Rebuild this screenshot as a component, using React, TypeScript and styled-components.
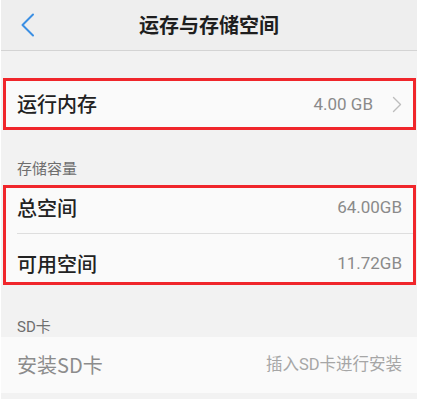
import React from "react";
import styled, { createGlobalStyle } from "styled-components";

const Global = createGlobalStyle`
  html, body { margin: 0; padding: 0; background: #ffffff; }
  body { font-family: Roboto, "Noto Sans CJK SC", "Noto Sans", sans-serif; }
  * { box-sizing: border-box; }
`;

const Page = styled.div`
  width: 416px;
  height: 399px;
  margin-left: 1px;
  background: #f2f2f2;
  display: flex;
  flex-direction: column;
  overflow: hidden;
`;

const Header = styled.header`
  height: 51px;
  flex: none;
  background: #eeeeee;
  border-bottom: 1px solid #d4d4d4;
  display: grid;
  grid-template-columns: 60px 1fr 60px;
  align-items: center;
`;

const BackButton = styled.div`
  display: flex;
  align-items: center;
  padding-left: 19px;
  height: 100%;
`;

const Title = styled.h1`
  margin: 0;
  text-align: center;
  font-size: 20px;
  font-weight: 700;
  color: #1e1e1e;
  line-height: 1;
  font-family: "Noto Sans CJK SC", sans-serif;
`;

const Spacer = styled.div<{ $h: number }>`
  height: ${(p) => p.$h}px;
  flex: none;
`;

const Highlight = styled.section`
  margin: 0 1px 0 2px;
  border: 3px solid #f0262b;
  background: #fafafa;
  display: flex;
  flex-direction: column;
  flex: none;
`;

const Row = styled.div<{ $h: number; $pt?: number; $pb?: number }>`
  height: ${(p) => p.$h}px;
  padding: ${(p) => p.$pt ?? 0}px 11px ${(p) => p.$pb ?? 0}px 11px;
  display: flex;
  align-items: center;
  justify-content: space-between;
  flex: none;
`;

const PlainRow = styled(Row)`
  background: #fafafa;
  padding-left: 16px;
  padding-right: 15px;
`;

const Divider = styled.div`
  height: 1px;
  margin-left: 11px;
  background: #dedede;
  flex: none;
`;

const Label = styled.span<{ $muted?: boolean }>`
  font-family: "Noto Sans CJK SC", Roboto, sans-serif;
  font-size: 20px;
  font-weight: ${(p) => (p.$muted ? 400 : 500)};
  color: ${(p) => (p.$muted ? "#8c8c8c" : "#222222")};
  line-height: 1;
  display: flex;
  align-items: center;
`;

const Value = styled.span<{ $size?: number; $light?: boolean }>`
  font-family: Roboto, "Noto Sans CJK SC", sans-serif;
  font-size: ${(p) => p.$size ?? 17}px;
  color: ${(p) => (p.$light ? "#a6a6a6" : "#8a8a8a")};
  line-height: 1;
  display: flex;
  align-items: center;
  gap: 19px;
`;

const SectionLabel = styled.div<{ $h: number; $pb: number }>`
  height: ${(p) => p.$h}px;
  padding: 0 16px ${(p) => p.$pb}px 16px;
  display: flex;
  align-items: flex-end;
  font-family: Roboto, "Noto Sans CJK SC", sans-serif;
  font-size: 15px;
  line-height: 20px;
  color: #6e6e6e;
  flex: none;
`;

const Chevron = () => (
  <svg width="10" height="17" viewBox="0 0 10 17" fill="none">
    <path d="M1.5 1.5 L8.5 8.5 L1.5 15.5" stroke="#bdbdbd" strokeWidth="1.4" strokeLinecap="round" strokeLinejoin="round" />
  </svg>
);

const BackIcon = () => (
  <svg width="15" height="24" viewBox="0 0 15 24" fill="none">
    <path d="M13 1.5 L2.5 12 L13 22.5" stroke="#3b8fe3" strokeWidth="2" strokeLinecap="round" strokeLinejoin="round" />
  </svg>
);

export default function App() {
  return (
    <>
      <Global />
      <Page>
        <Header>
          <BackButton>
            <BackIcon />
          </BackButton>
          <Title>运存与存储空间</Title>
          <div />
        </Header>
        <Spacer $h={27} />
        <Highlight>
          <Row $h={46}>
            <Label>运行内存</Label>
            <Value>
              4.00 GB
              <Chevron />
            </Value>
          </Row>
        </Highlight>
        <SectionLabel $h={55} $pb={6}>存储容量</SectionLabel>
        <Highlight>
          <Row $h={45} $pb={6}>
            <Label>总空间</Label>
            <Value>64.00GB</Value>
          </Row>
          <Divider />
          <Row $h={48} $pt={11}>
            <Label>可用空间</Label>
            <Value>11.72GB</Value>
          </Row>
        </Highlight>
        <SectionLabel $h={52} $pb={0}>SD卡</SectionLabel>
        <PlainRow $h={56}>
          <Label $muted>安装SD卡</Label>
          <Value $size={16.5} $light>插入SD卡进行安装</Value>
        </PlainRow>
      </Page>
    </>
  );
}
